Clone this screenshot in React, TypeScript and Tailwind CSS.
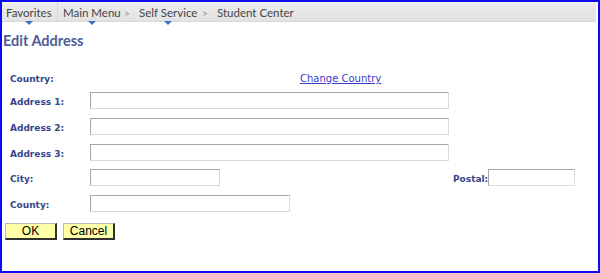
import React from "react";

const Arrow = () => (
  <span className="block w-0 h-0 border-l-[4px] border-r-[4px] border-t-[4px] border-l-transparent border-r-transparent border-t-[#3d72c9]" />
);

const NavItem = ({ label, arrow, w }: { label: string; arrow?: boolean; w: string }) => (
  <span className={`flex flex-col items-start ${w}`}>
    <span className="inline-flex flex-col items-center">
      <span className="leading-[14px] text-[#454545]">{label}</span>
      <span className="h-[4px] mt-[1px] flex justify-center">{arrow ? <Arrow /> : null}</span>
    </span>
  </span>
);

const Input = ({ w }: { w: string }) => (
  <div
    className={`${w} h-[17px] bg-white border border-t-[#a6a6a6] border-l-[#a6a6a6] border-b-[#dadada] border-r-[#dadada]`}
  />
);

const Label = ({ children, w = "w-[80px]" }: { children: React.ReactNode; w?: string }) => (
  <div className={`${w} h-[17px] text-[9px] font-bold text-[#34468a] leading-[20px] shrink-0`}>{children}</div>
);

const Btn = ({ label, w }: { label: string; w: string }) => (
  <button
    className={`${w} h-[17px] bg-[#ffffa8] border-t border-l border-t-[#b8b8b8] border-l-[#b8b8b8] border-r-2 border-b-2 border-r-[#303030] border-b-[#303030] text-[12px] leading-[13px] text-black flex items-center justify-center`}
    style={{ fontFamily: '"Liberation Sans", Arial, sans-serif' }}
  >
    {label}
  </button>
);

export default function App() {
  return (
    <div
      className="w-[600px] h-[273px] border-2 border-[#0a0af5] bg-white box-border flex flex-col"
      style={{ fontFamily: '"DejaVu Sans", Verdana, sans-serif' }}
    >
      <div
        className="mr-[2px] h-[20px] border-t border-t-[#f6f6f6] border-b border-b-[#d8d8d8] bg-gradient-to-b from-[#ececec] to-[#e2e2e2] flex items-start pt-[3px] pl-[4px] text-[11.5px]"
        style={{ fontFamily: 'Lato, "Open Sans", sans-serif' }}
      >
        <NavItem label="Favorites" arrow w="w-[51px]" />
        <span className="self-stretch -mt-[3px] border-l border-dotted border-l-[#c4c4c4] w-[6px]" />
        <NavItem label="Main Menu" arrow w="w-[58px]" />
        <span className="w-[12px] text-center leading-[14px] text-[#8a8a8a] text-[10px]">&gt;</span>
        <span className="w-[6px]" />
        <NavItem label="Self Service" arrow w="w-[60px]" />
        <span className="w-[12px] text-center leading-[14px] text-[#8a8a8a] text-[10px]">&gt;</span>
        <span className="w-[6px]" />
        <NavItem label="Student Center" w="w-[90px]" />
      </div>

      <div
        className="mt-[8px] ml-[1px] h-[22px] leading-[22px] text-[14.5px] font-bold text-[#4f5c98]"
        style={{ fontFamily: 'Lato, "Open Sans", sans-serif' }}
      >
        Edit Address
      </div>

      <div className="pl-[8px] flex flex-col">
        <div className="mt-[17px] flex items-center h-[17px]">
          <Label>Country:</Label>
          <div className="w-[210px]" />
          <a href="#" className="h-[17px] text-[10px] text-[#3b3bcc] underline leading-[19px]">
            Change Country
          </a>
        </div>
        <div className="mt-[6px] flex items-center">
          <Label>Address 1:</Label>
          <Input w="w-[359px]" />
        </div>
        <div className="mt-[9px] flex items-center">
          <Label>Address 2:</Label>
          <Input w="w-[359px]" />
        </div>
        <div className="mt-[9px] flex items-center">
          <Label>Address 3:</Label>
          <Input w="w-[359px]" />
        </div>
        <div className="mt-[8px] flex items-center">
          <Label>City:</Label>
          <Input w="w-[130px]" />
          <div className="w-[233px]" />
          <Label w="w-[35px]">Postal:</Label>
          <Input w="w-[87px]" />
        </div>
        <div className="mt-[9px] flex items-center">
          <Label>County:</Label>
          <Input w="w-[200px]" />
        </div>
      </div>

      <div className="mt-[11px] ml-[3px] flex gap-[6px]">
        <Btn label="OK" w="w-[52px]" />
        <Btn label="Cancel" w="w-[52px]" />
      </div>
    </div>
  );
}
